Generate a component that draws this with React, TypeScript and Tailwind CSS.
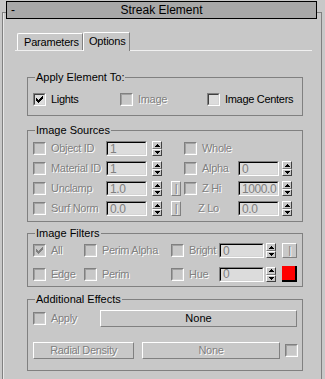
import React from "react";

const DIS = "text-[#808080] [text-shadow:1px_1px_0_#ffffff] tracking-[-0.3px] whitespace-nowrap";
const LBL = "tracking-[-0.3px] whitespace-nowrap";

function Check({ checked = false, disabled = false }: { checked?: boolean; disabled?: boolean }) {
    return (
        <span className="flex w-[13px] h-[13px] shrink-0 border border-t-[#808080] border-l-[#808080] border-b-white border-r-white">
            <span
                className={`flex-1 flex items-center justify-center border border-b-[#d4d4d4] border-r-[#d4d4d4] ${
                    disabled ? "border-t-[#a0a0a0] border-l-[#a0a0a0] bg-[#c8c8c8]" : "border-t-[#404040] border-l-[#404040] bg-[#dcdcdc]"
                }`}
            >
                {checked && (
                    <svg width="7" height="7" viewBox="0 0 7 7" shapeRendering="crispEdges">
                        <path
                            d="M6 0h1v1h-1z M5 1h2v1h-2z M0 2h1v1h-1z M4 2h3v1h-3z M0 3h2v1h-2z M3 3h3v1h-3z M0 4h5v1h-5z M1 5h3v1h-3z M2 6h1v1h-1z"
                            fill={disabled ? "#808080" : "#000000"}
                        />
                    </svg>
                )}
            </span>
        </span>
    );
}

// sunken number field
function Field({ value, w }: { value: string; w: string }) {
    return (
        <span className={`${w} h-[15px] shrink-0 flex border border-t-[#808080] border-l-[#808080] border-b-white border-r-white`}>
            <span className="flex-1 flex items-center pl-[2px] border border-t-black border-l-black border-b-[#d4d4d4] border-r-[#d4d4d4] bg-[#dcdcdc] text-[#808080] text-[12px] tracking-[-0.4px] leading-none overflow-hidden">
                {value}
            </span>
        </span>
    );
}

function Spin({ ml }: { ml: string }) {
    return (
        <span className={`${ml} w-[10px] h-[15px] shrink-0 flex flex-col`}>
            <span className="h-[8px] flex items-center justify-center border border-t-white border-l-white border-b-[#808080] border-r-[#404040]">
                <svg width="5" height="3" viewBox="0 0 5 3" shapeRendering="crispEdges">
                    <path d="M2 0h1v1h1v1h1v1H0V2h1V1h1z" fill="#000" />
                </svg>
            </span>
            <span className="h-[7px] flex items-center justify-center border border-t-white border-l-white border-b-[#404040] border-r-[#404040]">
                <svg width="5" height="3" viewBox="0 0 5 3" shapeRendering="crispEdges">
                    <path d="M0 0h5v1H4v1H3v1H2V2H1V1H0z" fill="#000" />
                </svg>
            </span>
        </span>
    );
}

function Btn({ label, w, h, disabled = false, className = "" }: { label: string; w: string; h: string; disabled?: boolean; className?: string }) {
    return (
        <span
            className={`${w} ${h} ${className} shrink-0 flex items-center justify-center border border-t-white border-l-white border-b-[#808080] border-r-[#808080] ${
                disabled ? DIS : "text-black"
            }`}
        >
            {label}
        </span>
    );
}

function Group({ title, children, className }: { title: string; children: React.ReactNode; className: string }) {
    return (
        <fieldset className={`border border-[#808080] ${className}`}>
            <legend className="ml-[7px] px-[1px] text-[11px] leading-[13px] text-black">{title}</legend>
            {children}
        </fieldset>
    );
}

export default function App() {
    return (
        <div className="w-[325px] h-[379px] bg-[#c8c8c8] flex flex-col overflow-hidden font-['Liberation_Sans',Arial,sans-serif] text-[11px] leading-[13px] text-black select-none">
            {/* rollout frame */}
            <div className="mt-[12px] ml-[2px] w-[320px] flex-1 flex flex-col border-l border-r border-t border-[#808080] shadow-[inset_1px_0_0_#e8e8e8]">
                {/* title bar */}
                <div className="-mt-[12px] ml-[3px] w-[311px] h-[18px] flex items-center bg-[#a8a8a8] border border-black">
                    <span className="w-[20px] pl-[4px] text-[12px]">-</span>
                    <span className="flex-1 text-center text-[12px]">Streak Element</span>
                    <span className="w-[20px]" />
                </div>

                {/* tabs */}
                <div className="mt-[13px] ml-[12px] w-[297px] flex items-end pl-[2px] border-b border-[#f0f0f0]">
                    <span className="w-[66px] h-[17px] flex items-center pl-[6px] border-t border-l border-white border-r border-r-[#808080] rounded-tl-[2px] tracking-[-0.2px]">
                        Parameters
                    </span>
                    <span className="relative w-[47px] h-[19px] -mb-[1px] flex items-center pl-[5px] pb-[1px] bg-[#c8c8c8] border-t border-l border-white border-r border-r-[#808080] rounded-tl-[2px] tracking-[-0.2px]">
                        Options
                    </span>
                </div>

                <div className="ml-[24px] w-[276px] flex flex-col">
                    <Group title="Apply Element To:" className="mt-[20px] pt-[9px] pb-[9px]">
                        <div className="h-[13px] flex items-center pl-[5px]">
                            <span className="w-[87px] flex items-center">
                                <Check checked />
                                <span className={`ml-[5px] ${LBL}`}>Lights</span>
                            </span>
                            <span className="w-[87px] flex items-center">
                                <Check disabled />
                                <span className={`ml-[5px] ${DIS}`}>Image</span>
                            </span>
                            <span className="flex items-center">
                                <Check />
                                <span className={`ml-[5px] ${LBL}`}>Image Centers</span>
                            </span>
                        </div>
                    </Group>

                    <Group title="Image Sources" className="mt-[8px] pt-[4px] pb-[5px]">
                        <div className="flex flex-col gap-[5px]">
                            <div className="h-[15px] flex items-center pl-[5px]">
                                <Check disabled />
                                <span className={`ml-[5px] w-[55px] ${DIS}`}>Object ID</span>
                                <Field value="1" w="w-[41px]" />
                                <Spin ml="ml-[5px]" />
                                <span className="ml-[22px]">
                                    <Check disabled />
                                </span>
                                <span className={`ml-[5px] ${DIS}`}>Whole</span>
                            </div>
                            <div className="h-[15px] flex items-center pl-[5px]">
                                <Check disabled />
                                <span className={`ml-[5px] w-[55px] ${DIS}`}>Material ID</span>
                                <Field value="1" w="w-[41px]" />
                                <Spin ml="ml-[5px]" />
                                <span className="ml-[22px]">
                                    <Check disabled />
                                </span>
                                <span className={`ml-[5px] w-[36px] ${DIS}`}>Alpha</span>
                                <Field value="0" w="w-[41px]" />
                                <Spin ml="ml-[3px]" />
                            </div>
                            <div className="h-[15px] flex items-center pl-[5px]">
                                <Check disabled />
                                <span className={`ml-[5px] w-[55px] ${DIS}`}>Unclamp</span>
                                <Field value="1.0" w="w-[41px]" />
                                <Spin ml="ml-[5px]" />
                                <Btn label="|" w="w-[10px]" h="h-[15px]" disabled className="ml-[9px]" />
                                <span className="ml-[3px]">
                                    <Check disabled />
                                </span>
                                <span className={`ml-[5px] w-[36px] ${DIS}`}>Z Hi</span>
                                <Field value="1000.0" w="w-[41px]" />
                                <Spin ml="ml-[3px]" />
                            </div>
                            <div className="h-[15px] flex items-center pl-[5px]">
                                <Check disabled />
                                <span className={`ml-[5px] w-[55px] ${DIS}`}>Surf Norm</span>
                                <Field value="0.0" w="w-[41px]" />
                                <Spin ml="ml-[5px]" />
                                <Btn label="|" w="w-[10px]" h="h-[15px]" disabled className="ml-[9px]" />
                                <span className={`ml-[17px] w-[40px] ${DIS}`}>Z Lo</span>
                                <Field value="0.0" w="w-[41px]" />
                                <Spin ml="ml-[3px]" />
                            </div>
                        </div>
                    </Group>

                    <Group title="Image Filters" className="mt-[5px] pt-[3px] pb-[4px]">
                        <div className="flex flex-col gap-[8px]">
                            <div className="h-[15px] flex items-center pl-[5px]">
                                <Check checked disabled />
                                <span className={`ml-[5px] w-[33px] ${DIS}`}>All</span>
                                <Check disabled />
                                <span className={`ml-[5px] w-[69px] ${DIS}`}>Perim Alpha</span>
                                <Check disabled />
                                <span className={`ml-[5px] w-[30px] ${DIS}`}>Bright</span>
                                <Field value="0" w="w-[45px]" />
                                <Spin ml="ml-[2px]" />
                                <Btn label="|" w="w-[15px]" h="h-[15px]" disabled className="ml-[6px]" />
                            </div>
                            <div className="h-[16px] flex items-center pl-[5px]">
                                <Check disabled />
                                <span className={`ml-[5px] w-[33px] ${DIS}`}>Edge</span>
                                <Check disabled />
                                <span className={`ml-[5px] w-[69px] ${DIS}`}>Perim</span>
                                <Check disabled />
                                <span className={`ml-[5px] w-[30px] ${DIS}`}>Hue</span>
                                <Field value="0" w="w-[45px]" />
                                <Spin ml="ml-[2px]" />
                                <span className="ml-[6px] w-[15px] h-[16px] bg-[#ff0000] border-r-[2px] border-b-[2px] border-black" />
                            </div>
                        </div>
                    </Group>

                    <Group title="Additional Effects" className="mt-[6px] pt-[4px] pb-[11px]">
                        <div className="flex flex-col gap-[15px]">
                            <div className="h-[17px] flex items-center pl-[5px]">
                                <Check disabled />
                                <span className={`ml-[5px] w-[49px] ${DIS}`}>Apply</span>
                                <Btn label="None" w="w-[197px]" h="h-[17px]" />
                            </div>
                            <div className="h-[17px] flex items-center pl-[5px]">
                                <Btn label="Radial Density" w="w-[101px]" h="h-[17px]" disabled />
                                <Btn label="None" w="w-[138px]" h="h-[17px]" disabled className="ml-[8px]" />
                                <span className="ml-[5px]">
                                    <Check disabled />
                                </span>
                            </div>
                        </div>
                    </Group>
                </div>
            </div>
        </div>
    );
}
